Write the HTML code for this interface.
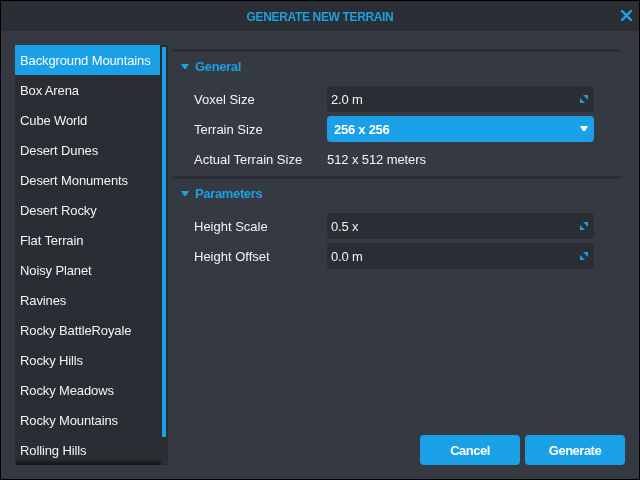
<!DOCTYPE html>
<html><head><meta charset="utf-8">
<style>
*{margin:0;padding:0;box-sizing:border-box}
html,body{width:640px;height:480px;overflow:hidden;background:#000}
body{will-change:transform;font-family:"Liberation Sans",sans-serif;position:relative}
.win{position:absolute;left:1px;top:1px;width:638px;height:478px;background:#353941}
.title{position:absolute;left:0;top:0;width:638px;height:30px;background:#2b2e35}
.title span{position:absolute;left:0;width:638px;top:9px;text-align:center;color:#1ba1e2;font-weight:bold;font-size:12px;line-height:14px;letter-spacing:-0.35px}
.abs{position:absolute}
.list{position:absolute;left:14px;top:44px;width:153px;height:420px;background:#2a2d34;overflow:hidden}
.item{position:absolute;left:0;width:145px;height:30px;color:#f4f4f4;font-size:13px;line-height:32px;padding-left:5px;white-space:nowrap;letter-spacing:-0.12px}
.item.sel{background:#1aa0e6;color:#fff}
.sb{position:absolute;left:147px;top:2px;width:4px;height:390px;background:#1aa0e6}
.div{position:absolute;left:171px;width:449px;height:3px;background:#2b2e35}
.hdr{position:absolute;color:#1ba1e2;font-weight:bold;font-size:13px;line-height:18px;letter-spacing:-0.35px}
.tri{position:absolute;width:0;height:0;border-left:4px solid transparent;border-right:4px solid transparent;border-top:6px solid #1ba1e2}
.lbl{position:absolute;left:193px;color:#f4f4f4;font-size:13px;line-height:18px}
.inp{position:absolute;left:326px;width:267px;height:26px;background:#2a2d34;border-radius:4px;color:#f4f4f4;font-size:13px;line-height:28px;padding-left:4px;letter-spacing:-0.2px}
.dd{background:#1aa0e6;color:#fff;font-weight:bold;padding-left:7px;letter-spacing:-0.25px}
.btn{position:absolute;top:434px;height:30px;background:#1aa0e6;border-radius:4px;color:#fff;font-weight:bold;font-size:13px;line-height:32px;text-align:center;letter-spacing:-0.5px}
</style></head><body>
<div class="win">
  <div class="title"><span>GENERATE NEW TERRAIN</span>
    <svg class="abs" style="left:620px;top:9px" width="11" height="11" viewBox="0 0 11 11"><path d="M0 0L11 11M11 0L0 11" stroke="#1ba1e2" stroke-width="2.4"/></svg>
  </div>
  <div class="list">
    <div class="item sel" style="top:0">Background Mountains</div>
    <div class="item" style="top:30px">Box Arena</div>
    <div class="item" style="top:60px">Cube World</div>
    <div class="item" style="top:90px">Desert Dunes</div>
    <div class="item" style="top:120px">Desert Monuments</div>
    <div class="item" style="top:150px">Desert Rocky</div>
    <div class="item" style="top:180px">Flat Terrain</div>
    <div class="item" style="top:210px">Noisy Planet</div>
    <div class="item" style="top:240px">Ravines</div>
    <div class="item" style="top:270px">Rocky BattleRoyale</div>
    <div class="item" style="top:300px">Rocky Hills</div>
    <div class="item" style="top:330px">Rocky Meadows</div>
    <div class="item" style="top:360px">Rocky Mountains</div>
    <div class="item" style="top:390px">Rolling Hills</div>
    <div class="sb"></div>
    <div class="abs" style="left:1px;top:414px;width:145px;height:6px;background:linear-gradient(rgba(0,0,0,0),rgba(0,0,0,0.3) 50%,rgba(0,0,0,0.55));border-radius:0 4px 0 0"></div>
  </div>
  <div class="div" style="top:48px"></div>
  <svg class="abs" style="left:180px;top:63px" width="8" height="5" viewBox="0 0 8 5"><path d="M0 0H8L4.8 5H3.2Z" fill="#1ba1e2"/></svg>
  <div class="hdr" style="left:194px;top:57px">General</div>
  <div class="lbl" style="top:90px">Voxel Size</div>
  <div class="inp" style="top:85px">2.0 m<svg class="abs" style="left:253px;top:9px" width="8" height="8" viewBox="0 0 8 8"><path d="M3 0H8V5Z" fill="#1ba1e2"/><path d="M0 3V8H5Z" fill="#1ba1e2"/></svg></div>
  <div class="lbl" style="top:120px">Terrain Size</div>
  <div class="inp dd" style="top:115px">256 x 256<svg class="abs" style="left:253px;top:10px" width="8" height="5" viewBox="0 0 8 5"><path d="M0 0H8L5 5H3Z" fill="#fff"/></svg></div>
  <div class="lbl" style="top:150px">Actual Terrain Size</div>
  <div class="lbl" style="left:326px;top:150px;letter-spacing:-0.1px">512 x 512 meters</div>
  <div class="div" style="top:175px"></div>
  <svg class="abs" style="left:180px;top:190px" width="8" height="5" viewBox="0 0 8 5"><path d="M0 0H8L4.8 5H3.2Z" fill="#1ba1e2"/></svg>
  <div class="hdr" style="left:194px;top:184px">Parameters</div>
  <div class="lbl" style="top:217px">Height Scale</div>
  <div class="inp" style="top:212px">0.5 x<svg class="abs" style="left:253px;top:9px" width="8" height="8" viewBox="0 0 8 8"><path d="M3 0H8V5Z" fill="#1ba1e2"/><path d="M0 3V8H5Z" fill="#1ba1e2"/></svg></div>
  <div class="lbl" style="top:247px">Height Offset</div>
  <div class="inp" style="top:242px">0.0 m<svg class="abs" style="left:253px;top:9px" width="8" height="8" viewBox="0 0 8 8"><path d="M3 0H8V5Z" fill="#1ba1e2"/><path d="M0 3V8H5Z" fill="#1ba1e2"/></svg></div>
  <div class="btn" style="left:419px;width:100px">Cancel</div>
  <div class="btn" style="left:524px;width:100px">Generate</div>
</div>
</body></html>
